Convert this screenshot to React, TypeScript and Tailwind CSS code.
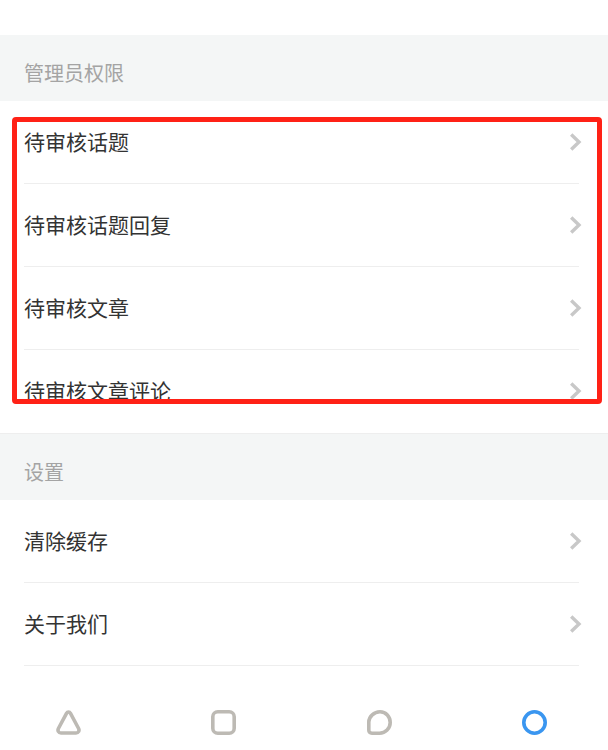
const FONT = "font-['Microsoft_YaHei','Noto_Sans_CJK_SC',sans-serif]";

function Chevron() {
  return (
    <svg width="13" height="18" viewBox="0 0 13 18" fill="none" className="shrink-0">
      <path d="M2.2 1.5 L10 9 L2.2 16.5" stroke="#c8c8c8" strokeWidth="3.4" />
    </svg>
  );
}

function Row({ label }: { label: string }) {
  return (
    <div className="ml-6 mr-[29px] flex h-[83px] items-center justify-between border-b border-[#eeeeee]">
      <span className="-mt-[3px] text-[21px] leading-[30px] text-[#333333]">{label}</span>
      <span className="-mr-[3px] flex">
        <Chevron />
      </span>
    </div>
  );
}

function Header({ label, border }: { label: string; border?: boolean }) {
  return (
    <div className={`flex items-center bg-[#f4f6f6] pl-6 pt-[10px] ${border ? "h-[67px] border-t border-[#eeeeee]" : "h-[66px]"}`}>
      <span className="text-[20px] leading-[28px] text-[#a4a4a4]">{label}</span>
    </div>
  );
}

export default function App() {
  return (
    <div className={`relative h-[750px] w-[608px] overflow-hidden bg-white ${FONT}`}>
      <div className="h-[35px]" />
      <Header label="管理员权限" />
      <div className="h-[302px] overflow-hidden">
        <Row label="待审核话题" />
        <Row label="待审核话题回复" />
        <Row label="待审核文章" />
        <Row label="待审核文章评论" />
      </div>
      <div className="h-[30px]" />
      <Header label="设置" border />
      <Row label="清除缓存" />
      <Row label="关于我们" />
      <nav className="flex justify-between pl-[56px] pr-[61px] pt-[44px]">
        <svg width="25" height="25" viewBox="0 0 25 25" fill="none">
          <path d="M12.5 2 C13.5 2 14 2.5 14.5 3.4 L22.6 18.5 C23.6 20.5 22.6 23 20 23 L5 23 C2.4 23 1.4 20.5 2.4 18.5 L10.5 3.4 C11 2.5 11.5 2 12.5 2 Z" stroke="#bdbab4" strokeWidth="3.6" strokeLinejoin="round" />
        </svg>
        <svg width="25" height="25" viewBox="0 0 25 25" fill="none">
          <rect x="1.8" y="1.8" width="21.4" height="21.4" rx="5" stroke="#bdbab4" strokeWidth="3.6" />
        </svg>
        <svg width="25" height="25" viewBox="0 0 25 25" fill="none">
          <path d="M13 1.8 C19 1.8 23.2 6.5 23.2 12.5 C23.2 18.5 18.5 23.2 12.5 23.2 L5 23.2 C2.8 23.2 1.8 22 1.8 20 L1.8 12 C2 6.5 7 1.8 13 1.8 Z" stroke="#bdbab4" strokeWidth="3.6" />
        </svg>
        <svg width="25" height="25" viewBox="0 0 25 25" fill="none">
          <circle cx="12.5" cy="12.5" r="10.7" stroke="#3a96f0" strokeWidth="3.6" />
        </svg>
      </nav>
      <div className="absolute left-[12px] top-[117px] h-[287px] w-[590px] rounded-[4px] border-[5px] border-[#ff2116]" />
    </div>
  );
}
